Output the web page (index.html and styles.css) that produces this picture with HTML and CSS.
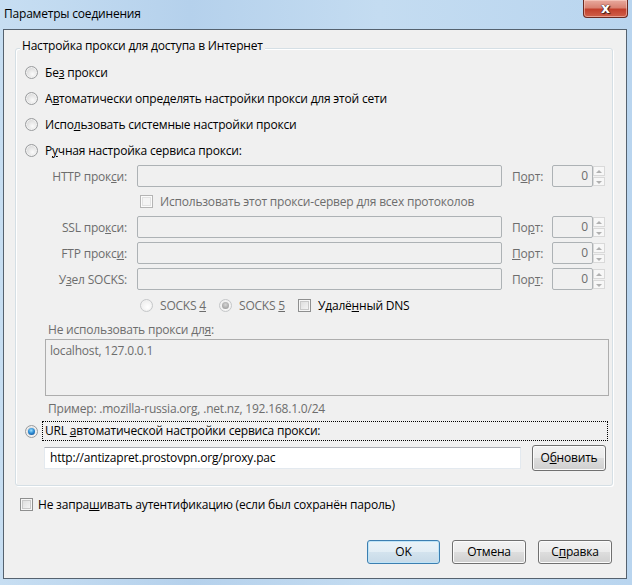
FILE: index.html
```html
<!DOCTYPE html>
<html lang="ru">
<head>
    <meta charset="UTF-8">
    <title>Параметры соединения</title>
    <link rel="stylesheet" href="styles.css">
</head>
<body>
    <div class="window">
        <div class="titlebar">
            <span class="title">Параметры соединения</span>
            <div class="close"><span>x</span></div>
        </div>

        <div class="client">
            <div class="group">
                <span class="legend">Настройка прокси для доступа в Интернет</span>

                <div class="radio-row"><span class="radio"></span><span>Бе<u>з</u> прокси</span></div>
                <div class="radio-row"><span class="radio"></span><span>А<u>в</u>томатически определять настройки прокси для этой сети</span></div>
                <div class="radio-row"><span class="radio"></span><span>Испо<u>л</u>ьзовать системные настройки прокси</span></div>
                <div class="radio-row"><span class="radio"></span><span>Р<u>у</u>чная настройка сервиса прокси:</span></div>

                <div class="proxy-grid">
                    <span class="lbl">HTTP прок<u>с</u>и:</span>
                    <span class="field"></span>
                    <span class="lbl-port">П<u>о</u>рт:</span>
                    <span class="port"><span class="port-val">0</span><span class="spin"><i class="up"></i><i class="down"></i></span></span>

                    <span class="check-line"><span class="check off"></span>Использовать этот прокси-сервер для всех протоколов</span>

                    <span class="lbl">SSL про<u>к</u>си:</span>
                    <span class="field"></span>
                    <span class="lbl-port">По<u>р</u>т:</span>
                    <span class="port"><span class="port-val">0</span><span class="spin"><i class="up"></i><i class="down"></i></span></span>

                    <span class="lbl">FTP прокс<u>и</u>:</span>
                    <span class="field"></span>
                    <span class="lbl-port"><u>П</u>орт:</span>
                    <span class="port"><span class="port-val">0</span><span class="spin"><i class="up"></i><i class="down"></i></span></span>

                    <span class="lbl">У<u>з</u>ел SOCKS:</span>
                    <span class="field"></span>
                    <span class="lbl-port">Пор<u>т</u>:</span>
                    <span class="port"><span class="port-val">0</span><span class="spin"><i class="up"></i><i class="down"></i></span></span>
                </div>

                <div class="socks-row">
                    <span class="radio off"></span><span class="muted">SOCKS <u>4</u></span>
                    <span class="radio off-checked"></span><span class="muted">SOCKS <u>5</u></span>
                    <span class="check"></span><span>Удалё<u>н</u>ный DNS</span>
                </div>

                <div class="noproxy-label muted">Не использовать прокси дл<u>я</u>:</div>
                <div class="noproxy-box">localhost, 127.0.0.1</div>
                <div class="example muted">Пример: .mozilla-russia.org, .net.nz, 192.168.1.0/24</div>

                <div class="url-row">
                    <span class="radio checked"></span>
                    <span class="focus">URL <u>а</u>втоматической настройки сервиса прокси:</span>
                </div>
                <div class="url-input-row">
                    <span class="url-input">http://antizapret.prostovpn.org/proxy.pac</span>
                    <span class="button reload">О<u>б</u>новить</span>
                </div>
            </div>

            <div class="auth-row">
                <span class="check"></span><span>Не запра<u>ш</u>ивать аутентификацию (если был сохранён пароль)</span>
            </div>

            <div class="buttons">
                <span class="button default">OK</span>
                <span class="button">Отмена</span>
                <span class="button">С<u>п</u>равка</span>
            </div>
        </div>
    </div>
</body>
</html>
```

FILE: styles.css
```css
* {
    box-sizing: border-box;
}

body {
    margin: 0;
    font-family: "Open Sans", "Noto Sans", sans-serif;
    font-size: 12px;
    letter-spacing: -0.2px;
    color: #000000;
}

u {
    text-decoration: underline;
    text-underline-offset: 1px;
}

.window {
    width: 632px;
    height: 585px;
    display: flex;
    flex-direction: column;
    padding: 0 5px 6px 3px;
    background: linear-gradient(90deg, #c7def2 0%, #b5d1ec 30%, #c4dcf1 60%, #b9d5ef 100%);
}

.titlebar {
    height: 29px;
    display: flex;
    align-items: flex-start;
    flex-shrink: 0;
}

.title {
    margin: 6px 0 0 1px;
    line-height: 16px;
}

.close {
    margin-left: auto;
    margin-right: -1px;
    width: 45px;
    height: 18px;
    border: 1px solid #6b2a22;
    border-top: none;
    border-radius: 0 0 4px 4px;
    background: linear-gradient(#e8aa9e 0%, #d98272 45%, #c2402c 55%, #d0604a 100%);
    box-shadow: inset 0 0 0 1px rgba(255, 220, 210, 0.5);
    display: flex;
    justify-content: center;
    align-items: center;
}

.close span {
    font-family: "DejaVu Sans", sans-serif;
    font-weight: bold;
    font-size: 14px;
    line-height: 14px;
    color: #ffffff;
    text-shadow: 0 0 1px #3a1d1a, 0 0 1px #3a1d1a, 1px 1px 1px #3a1d1a;
    margin-top: -2px;
}

.client {
    flex: 1;
    background: #f0f0f0;
    border: 1px solid #55626f;
    display: flex;
    flex-direction: column;
}

/* group box */
.group {
    position: relative;
    margin: 18px 13px 0 11px;
    height: 438px;
    border: 1px solid #d5dfe5;
    border-radius: 3px;
    box-shadow: inset 1px 1px 0 #ffffff, 1px 1px 0 #ffffff;
    padding: 10px 0 0 9px;
}

.legend {
    position: absolute;
    left: 4px;
    top: -11px;
    padding: 0 2px;
    line-height: 16px;
    background: #f0f0f0;
}

.radio-row {
    height: 26px;
    display: flex;
    align-items: center;
    gap: 7px;
}

/* radio buttons and check boxes */
.radio {
    width: 13px;
    height: 13px;
    border-radius: 50%;
    border: 1px solid #9a9c9e;
    background: radial-gradient(circle at 60% 65%, #fbfbfb 0%, #e6e6e6 45%, #c9c9c9 100%);
    box-shadow: inset 0 0 0 1px #f2f2f2;
    flex-shrink: 0;
    position: relative;
}

.radio.off,
.radio.off-checked {
    border-color: #c5c7c9;
    background: radial-gradient(circle at 60% 65%, #ffffff 0%, #f1f1f1 60%, #e2e2e2 100%);
}

.radio.off-checked::after,
.radio.checked::after {
    content: "";
    position: absolute;
    left: 2px;
    top: 2px;
    width: 7px;
    height: 7px;
    border-radius: 50%;
}

.radio.off-checked::after {
    background: radial-gradient(circle at 50% 40%, #d6d6d6 0%, #a4a4a4 70%, #8e8e8e 100%);
}

.radio.checked::after {
    background: radial-gradient(circle at 45% 35%, #9fe0ff 0%, #2f8fd6 45%, #0c3f85 100%);
}

.check {
    width: 13px;
    height: 13px;
    border: 1px solid #8e8f8f;
    background: linear-gradient(135deg, #d9d9d9 0%, #ececec 60%, #fafafa 100%);
    box-shadow: inset 0 0 0 1px #f6f6f6, inset 0 0 0 2px #c8c8c8;
    flex-shrink: 0;
}

.check.off {
    border-color: #b4b4b4;
    background: #f4f4f4;
    box-shadow: inset 0 0 0 1px #fbfbfb, inset 0 0 0 2px #e2e2e2;
}

.muted,
.lbl,
.lbl-port,
.check-line {
    color: #6d6d6d;
}

/* manual proxy grid */
.proxy-grid {
    margin-top: 2px;
    padding-left: 20px;
    display: grid;
    grid-template-columns: 82px 365px 30px 53px;
    grid-template-rows: 22px 21px 22px 22px 22px;
    column-gap: 10px;
    row-gap: 4px;
    align-items: center;
}

.lbl {
    text-align: right;
    white-space: nowrap;
}

.field {
    height: 22px;
    border: 1px solid #adb2b5;
    border-radius: 2px;
    background: #f0f0f0;
}

.lbl-port {
    white-space: nowrap;
}

.port {
    height: 22px;
    display: flex;
}

.port-val {
    width: 41px;
    border: 1px solid #adb2b5;
    border-radius: 2px;
    text-align: right;
    padding-right: 4px;
    line-height: 20px;
    color: #6d6d6d;
}

.spin {
    width: 12px;
    display: flex;
    flex-direction: column;
    gap: 1px;
    padding: 1px 0;
}

.spin i {
    flex: 1;
    border: 1px solid #d9d9d9;
    background: #f7f7f7;
    position: relative;
}

.spin i::after {
    content: "";
    position: absolute;
    left: 2px;
    top: 3px;
    border-left: 3px solid transparent;
    border-right: 3px solid transparent;
}

.spin .up::after {
    border-bottom: 3px solid #b0b0b0;
}

.spin .down::after {
    border-top: 3px solid #b0b0b0;
}

.check-line {
    grid-column: 2 / 5;
    display: flex;
    align-items: center;
    gap: 7px;
    padding-left: 3px;
}

.socks-row {
    margin-top: 4px;
    height: 22px;
    padding-left: 115px;
    display: flex;
    align-items: center;
}

.socks-row .radio,
.socks-row .check {
    margin-right: 7px;
}

.socks-row .muted {
    margin-right: 13px;
}

.noproxy-label {
    height: 18px;
    line-height: 18px;
    padding-left: 23px;
    margin-top: 5px;
}

.noproxy-box {
    margin-left: 20px;
    width: 564px;
    height: 57px;
    border: 1px solid #adadad;
    padding: 3px 4px;
    line-height: 16px;
    color: #6d6d6d;
}

.example {
    height: 18px;
    line-height: 18px;
    padding-left: 23px;
    margin-top: 4px;
}

.url-row {
    margin-top: 3px;
    height: 20px;
    display: flex;
    align-items: center;
    gap: 4px;
}

.focus {
    width: 566px;
    height: 20px;
    line-height: 18px;
    border: 1px dotted #000000;
    padding-left: 2px;
}

.url-input-row {
    margin-top: 4px;
    height: 26px;
    padding-left: 19px;
    display: flex;
    align-items: center;
    gap: 11px;
}

.url-input {
    width: 477px;
    height: 22px;
    line-height: 20px;
    background: #ffffff;
    border: 1px solid #e3e9ef;
    border-top-color: #abadb3;
    padding-left: 5px;
}

/* buttons */
.button {
    height: 24px;
    width: 74px;
    border: 1px solid #707070;
    border-radius: 3px;
    background: linear-gradient(#f2f2f2 0%, #ebebeb 48%, #dddddd 52%, #cfcfcf 100%);
    box-shadow: inset 0 0 0 1px #fbfbfb;
    display: flex;
    justify-content: center;
    align-items: center;
    line-height: 16px;
}

.button.reload {
    height: 26px;
}

.button.default {
    width: 73px;
    border-color: #3c7fb1;
    background: linear-gradient(#eaf3f8 0%, #e3eef5 48%, #d3e3ee 52%, #c7dae8 100%);
    box-shadow: inset 0 0 0 1px #bfe4f7;
}

.auth-row {
    margin: 9px 0 0 16px;
    height: 18px;
    display: flex;
    align-items: center;
    gap: 5px;
}

.buttons {
    margin-top: 27px;
    padding-right: 14px;
    display: flex;
    justify-content: flex-end;
    gap: 12px;
}
```
